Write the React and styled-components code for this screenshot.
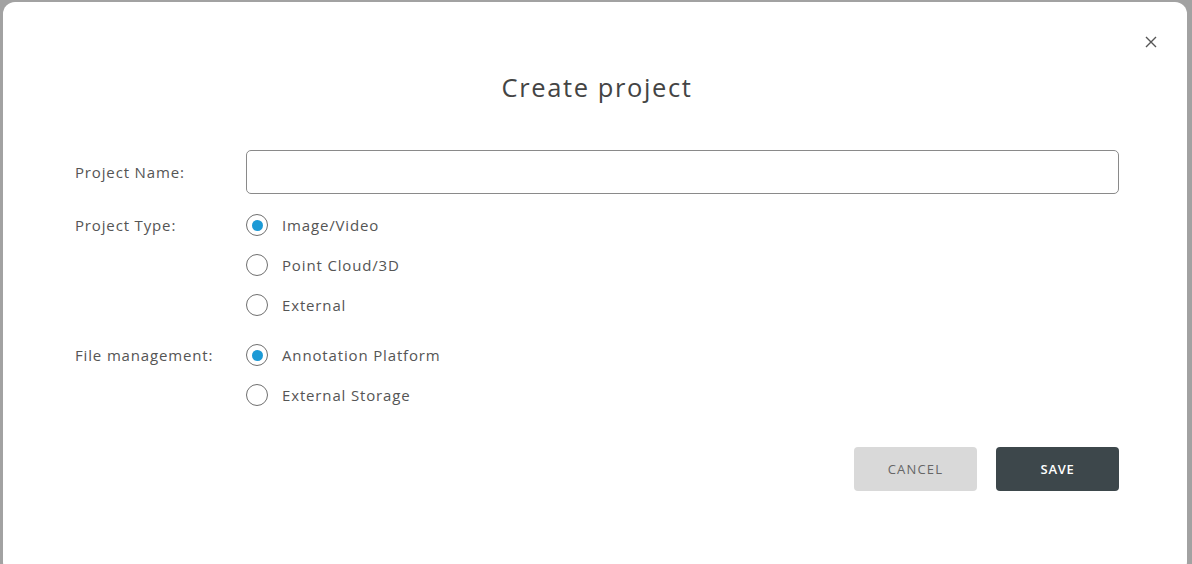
import React from 'react';
import styled, { createGlobalStyle } from 'styled-components';

const GlobalStyle = createGlobalStyle`
  html, body {
    margin: 0;
    padding: 0;
    background: #a2a2a2;
    font-family: 'Open Sans', 'Liberation Sans', sans-serif;
    overflow: hidden;
  }
`;

const Modal = styled.div`
  position: relative;
  box-sizing: border-box;
  margin: 2px 5px 0 3px;
  height: 572px;
  background: #fff;
  border-radius: 12px;
  padding: 69px 68px 0 72px;
`;

const CloseButton = styled.button`
  position: absolute;
  top: 32px;
  right: 28px;
  width: 16px;
  height: 16px;
  padding: 0;
  border: 0;
  background: none;
  cursor: pointer;
  display: flex;
  align-items: center;
  justify-content: center;
`;

const Title = styled.h1`
  margin: 0;
  text-align: center;
  font-size: 25.5px;
  line-height: 32px;
  font-weight: 400;
  color: #444;
  letter-spacing: 1.6px;
`;

const Form = styled.div`
  margin-top: 47px;
  display: flex;
  flex-direction: column;
`;

const FieldRow = styled.div`
  display: flex;
  align-items: flex-start;
  margin-top: ${(p) => p.$gap || 0}px;
`;

const Label = styled.div`
  width: 171px;
  flex: none;
  height: ${(p) => p.$h}px;
  line-height: ${(p) => p.$h}px;
  font-size: 15px;
  color: #555;
  letter-spacing: 0.85px;
`;

const TextInput = styled.input`
  flex: 1;
  box-sizing: border-box;
  height: 44px;
  border: 1px solid #8a8a8a;
  border-radius: 5px;
  padding: 0 12px;
  font-family: inherit;
  font-size: 14px;
  outline: none;
`;

const RadioGroup = styled.div`
  display: flex;
  flex-direction: column;
`;

const RadioRow = styled.label`
  display: flex;
  align-items: center;
  height: 40px;
  cursor: pointer;
`;

const Circle = styled.span`
  box-sizing: border-box;
  width: 22px;
  height: 22px;
  border-radius: 50%;
  border: 1.3px solid #6f6f6f;
  display: flex;
  align-items: center;
  justify-content: center;
  margin-right: 14px;

  &::after {
    content: '';
    width: 11px;
    height: 11px;
    border-radius: 50%;
    background: ${(p) => (p.$checked ? '#1c9ad6' : 'transparent')};
  }
`;

const RadioText = styled.span`
  font-size: 15px;
  color: #555;
  letter-spacing: 0.85px;
`;

const Footer = styled.div`
  display: flex;
  justify-content: flex-end;
  gap: 19px;
  margin-top: 32px;
`;

const Button = styled.button`
  width: 123px;
  height: 44px;
  border: 0;
  border-radius: 4px;
  font-family: inherit;
  font-size: 13px;
  letter-spacing: ${(p) => (p.$primary ? 0.7 : 1.2)}px;
  text-transform: uppercase;
  cursor: pointer;
  background: ${(p) => (p.$primary ? '#3d474b' : '#d9d9d9')};
  color: ${(p) => (p.$primary ? '#fff' : '#666')};
  font-weight: ${(p) => (p.$primary ? 600 : 400)};
`;

function Radio({ checked, children }) {
  return (
    <RadioRow>
      <Circle $checked={checked} />
      <RadioText>{children}</RadioText>
    </RadioRow>
  );
}

export default function App() {
  return (
    <>
      <GlobalStyle />
      <Modal>
        <CloseButton aria-label="close">
          <svg width="12" height="12" viewBox="0 0 12 12">
            <path d="M1 1L11 11M11 1L1 11" stroke="#555" strokeWidth="1.4" />
          </svg>
        </CloseButton>
        <Title>Create project</Title>
        <Form>
          <FieldRow>
            <Label $h={44}>Project Name:</Label>
            <TextInput />
          </FieldRow>
          <FieldRow $gap={11}>
            <Label $h={40}>Project Type:</Label>
            <RadioGroup>
              <Radio checked>Image/Video</Radio>
              <Radio>Point Cloud/3D</Radio>
              <Radio>External</Radio>
            </RadioGroup>
          </FieldRow>
          <FieldRow $gap={10}>
            <Label $h={40}>File management:</Label>
            <RadioGroup>
              <Radio checked>Annotation Platform</Radio>
              <Radio>External Storage</Radio>
            </RadioGroup>
          </FieldRow>
        </Form>
        <Footer>
          <Button>Cancel</Button>
          <Button $primary>Save</Button>
        </Footer>
      </Modal>
    </>
  );
}
